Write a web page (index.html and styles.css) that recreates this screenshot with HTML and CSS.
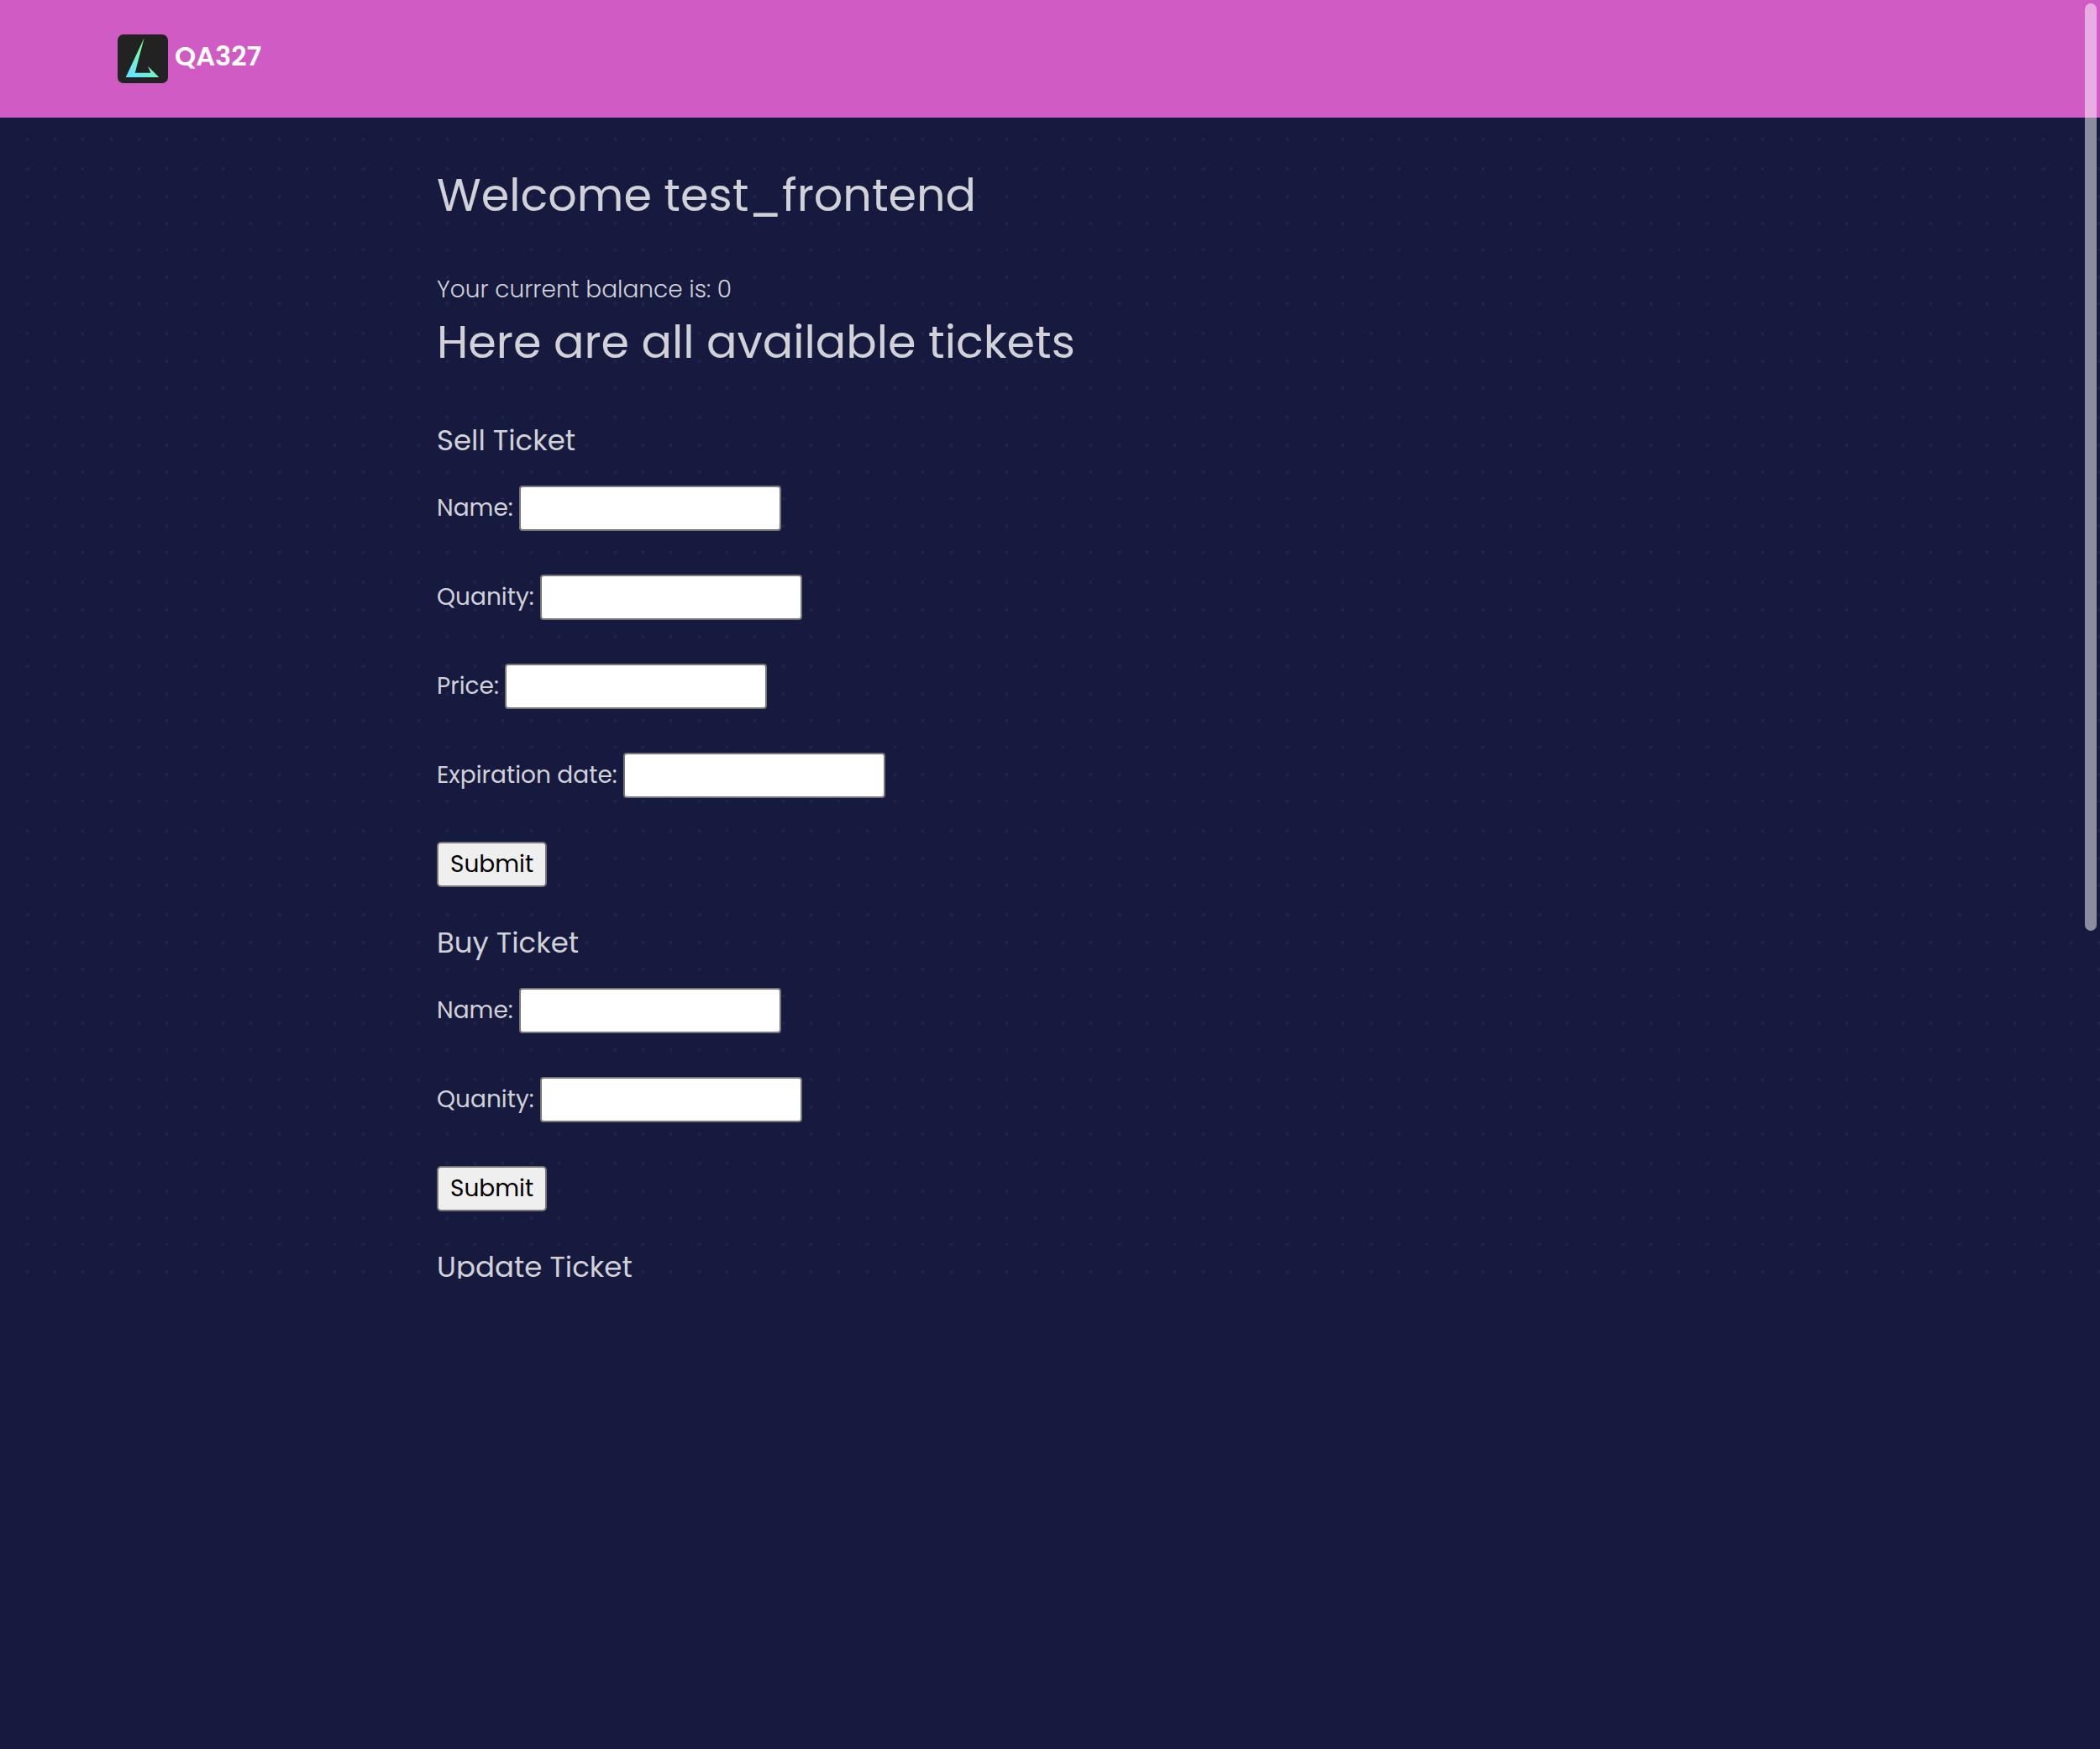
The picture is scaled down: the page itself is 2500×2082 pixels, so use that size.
FILE: index.html
```html
<!DOCTYPE html>
<html lang="en">
<head>
<meta charset="utf-8">
<meta name="viewport" content="width=device-width, initial-scale=1">
<title>QA327</title>
<link rel="stylesheet" href="styles.css">
</head>
<body>
<div class="app">
  <svg class="dots" aria-hidden="true">
    <defs>
      <pattern id="dot-grid" width="100" height="296" patternUnits="userSpaceOnUse">
        <g id="dot-column" class="dot">
          <circle cx="32.5" cy="1" r="2"/><circle cx="32.5" cy="34" r="2"/><circle cx="32.5" cy="65.5" r="2"/>
          <circle cx="32.5" cy="101" r="2"/><circle cx="32.5" cy="134" r="2"/><circle cx="32.5" cy="166" r="2"/>
          <circle cx="32.5" cy="201" r="2"/><circle cx="32.5" cy="234" r="2"/><circle cx="32.5" cy="266" r="2"/>
        </g>
        <use href="#dot-column" x="33"/>
        <use href="#dot-column" x="66"/>
      </pattern>
    </defs>
    <rect width="100%" height="100%" fill="url(#dot-grid)"/>
  </svg>

  <header class="header">
    <a class="brand" href="#">
      <svg class="logo" viewBox="0 0 60 58" aria-hidden="true">
        <defs>
          <linearGradient id="logo-fill" x1="16" y1="46" x2="36" y2="24" gradientUnits="userSpaceOnUse">
            <stop offset="0" stop-color="#66e5ff"/>
            <stop offset="1" stop-color="#7dfca0"/>
          </linearGradient>
        </defs>
        <rect width="60" height="58" rx="7" fill="#222"/>
        <path d="M31.7 4 9.7 51H49.3L36 37.7 39.5 45.7H20.7Z" fill="url(#logo-fill)"/>
      </svg>
      <span class="brand-name">QA327</span>
    </a>
  </header>

  <main class="content">
    <h1 class="title">Welcome test_frontend</h1>
    <p class="balance">Your current balance is: 0</p>
    <h2 class="title">Here are all available tickets</h2>

    <form class="ticket-form">
      <h3 class="form-title">Sell Ticket</h3>
      <div class="field"><label for="sell-name">Name:</label><input id="sell-name" type="text"></div>
      <div class="field"><label for="sell-quantity">Quanity:</label><input id="sell-quantity" type="text"></div>
      <div class="field"><label for="sell-price">Price:</label><input id="sell-price" type="text"></div>
      <div class="field"><label for="sell-date">Expiration date:</label><input id="sell-date" type="text"></div>
      <button class="submit" type="button">Submit</button>
    </form>

    <form class="ticket-form">
      <h3 class="form-title">Buy Ticket</h3>
      <div class="field"><label for="buy-name">Name:</label><input id="buy-name" type="text"></div>
      <div class="field"><label for="buy-quantity">Quanity:</label><input id="buy-quantity" type="text"></div>
      <button class="submit" type="button">Submit</button>
    </form>

    <form class="ticket-form">
      <h3 class="form-title">Update Ticket</h3>
    </form>
  </main>
</div>
<div class="scroll-thumb"></div>
</body>
</html>
```

FILE: styles.css
```css
* { box-sizing: border-box; }

body {
  margin: 0;
  background: #171a3f;
  color: #d1d1d8;
  font-family: Poppins, Inter, "Open Sans", sans-serif;
  font-size: 28px;
  line-height: 40px;
}

.app {
  position: relative;
  height: calc(100vh - 560px);
  overflow: hidden;
}

.dots {
  position: absolute;
  inset: 0;
  z-index: -1;
  width: 100%;
  height: 100%;
}

.dot { fill: #212449; }

.header {
  display: flex;
  align-items: center;
  height: 140px;
  padding: 0 140px;
  background: #d05bc5;
}

.brand {
  display: flex;
  align-items: center;
  gap: 8px;
  color: #fff;
  text-decoration: none;
}

.logo {
  width: 60px;
  height: 58px;
}

.brand-name {
  padding-bottom: 6px;
  font-size: 32px;
  font-weight: 600;
}

.content {
  max-width: 1460px;
  margin: 0 auto;
  padding-top: 56px;
}

.title {
  margin: 0 0 57px;
  font-size: 54px;
  font-weight: 400;
  line-height: 72px;
}

.balance {
  margin: 0 0 6px;
  font-weight: 300;
}

.ticket-form { margin-bottom: 42px; }

.form-title {
  margin: 0 0 30px;
  font-size: 34px;
  font-weight: 400;
  line-height: 48px;
}

.field {
  display: flex;
  align-items: center;
  gap: 7px;
  margin-bottom: 52px;
}

.field input {
  width: 312px;
  height: 54px;
  padding: 2px 4px;
  border: 2px solid #767676;
  border-radius: 4px;
  background: #fff;
  font: inherit;
}

.submit {
  display: block;
  height: 54px;
  padding: 0 14px;
  border: 2px solid #767676;
  border-radius: 5px;
  background: #efefef;
  color: #000;
  font: inherit;
}

.scroll-thumb {
  position: absolute;
  top: 4px;
  right: 4px;
  width: 14px;
  height: 1104px;
  border-radius: 7px;
  background: rgba(255, 255, 255, 0.5);
}
```
